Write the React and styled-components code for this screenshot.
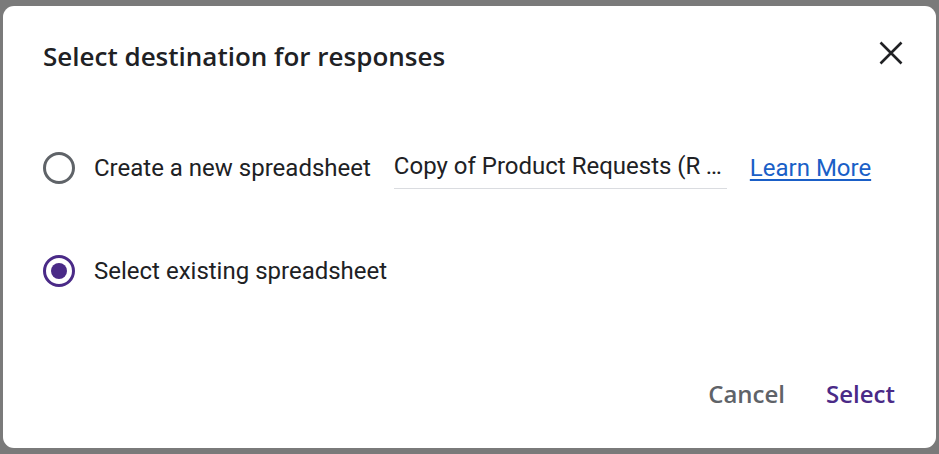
import React from "react";
import styled, { createGlobalStyle } from "styled-components";

const Global = createGlobalStyle`
  html, body { margin: 0; padding: 0; background: #7a7a7a; }
  body { width: 939px; height: 454px; overflow: hidden; }
`;

const Backdrop = styled.div`
  width: 939px;
  height: 454px;
  padding: 6px 3px 6px 3px;
  box-sizing: border-box;
  background: #7a7a7a;
`;

const Dialog = styled.div`
  width: 933px;
  height: 442px;
  background: #fff;
  border-radius: 11px;
  display: flex;
  flex-direction: column;
  box-sizing: border-box;
`;

const Header = styled.div`
  height: 100px;
  display: flex;
  align-items: center;
  justify-content: space-between;
  padding: 0 33px 0 40px;
`;

const Title = styled.h2`
  margin: 0;
  font-family: "Open Sans", sans-serif;
  font-weight: 600;
  font-size: 26px;
  color: #202124;
  letter-spacing: 0;
`;

const CloseButton = styled.button`
  width: 24px;
  height: 24px;
  padding: 0;
  border: 0;
  background: none;
  display: flex;
  align-items: center;
  justify-content: center;
  margin-top: -6px;
`;

const Options = styled.div`
  display: flex;
  flex-direction: column;
  gap: 55px;
  margin-top: 38px;
  padding-left: 40px;
`;

const Row = styled.div`
  height: 48px;
  display: flex;
  align-items: center;
`;

const Radio = styled.span`
  width: 32px;
  height: 32px;
  box-sizing: border-box;
  border-radius: 50%;
  border: 3px solid ${(p) => (p.$checked ? "#4a2a87" : "#5f6368")};
  display: flex;
  align-items: center;
  justify-content: center;
  flex: none;
  &::after {
    content: "";
    width: 16px;
    height: 16px;
    border-radius: 50%;
    background: #4a2a87;
    display: ${(p) => (p.$checked ? "block" : "none")};
  }
`;

const Label = styled.span`
  margin-left: 19px;
  font-family: Roboto, sans-serif;
  font-size: 24px;
  color: #202124;
`;

const Field = styled.div`
  margin-left: 23px;
  width: 333px;
  height: 44px;
  box-sizing: border-box;
  border-bottom: 1px solid #dadce0;
  display: flex;
  align-items: center;
  justify-content: space-between;
  font-family: Roboto, sans-serif;
  font-size: 24px;
  color: #202124;
  padding: 0 5px 2px 0;
  margin-top: -2px;
`;

const Link = styled.a`
  margin-left: 23px;
  font-family: Roboto, sans-serif;
  font-size: 24px;
  color: #1a5fc7;
  text-decoration: underline;
  text-underline-offset: 3px;
`;

const Footer = styled.div`
  margin-top: auto;
  margin-bottom: 35px;
  display: flex;
  justify-content: flex-end;
  gap: 25px;
  padding-right: 33px;
`;

const Button = styled.button`
  height: 40px;
  padding: 0 8px;
  border: 0;
  background: none;
  font-family: "Open Sans", sans-serif;
  font-weight: 600;
  font-size: 24px;
  color: ${(p) => (p.$primary ? "#4a2a87" : "#5f6368")};
`;

export default function App() {
  return (
    <>
      <Global />
      <Backdrop>
        <Dialog>
          <Header>
            <Title>Select destination for responses</Title>
            <CloseButton aria-label="Close">
              <svg width="24" height="24" viewBox="0 0 24 24">
                <path d="M1.5 1.5 L22.5 22.5 M22.5 1.5 L1.5 22.5" stroke="#202124" strokeWidth="2.6" fill="none" />
              </svg>
            </CloseButton>
          </Header>
          <Options>
            <Row>
              <Radio />
              <Label>Create a new spreadsheet</Label>
              <Field>
                <span>Copy of Product Requests (R</span>
                <span>…</span>
              </Field>
              <Link href="#">Learn More</Link>
            </Row>
            <Row>
              <Radio $checked />
              <Label>Select existing spreadsheet</Label>
            </Row>
          </Options>
          <Footer>
            <Button>Cancel</Button>
            <Button $primary>Select</Button>
          </Footer>
        </Dialog>
      </Backdrop>
    </>
  );
}
